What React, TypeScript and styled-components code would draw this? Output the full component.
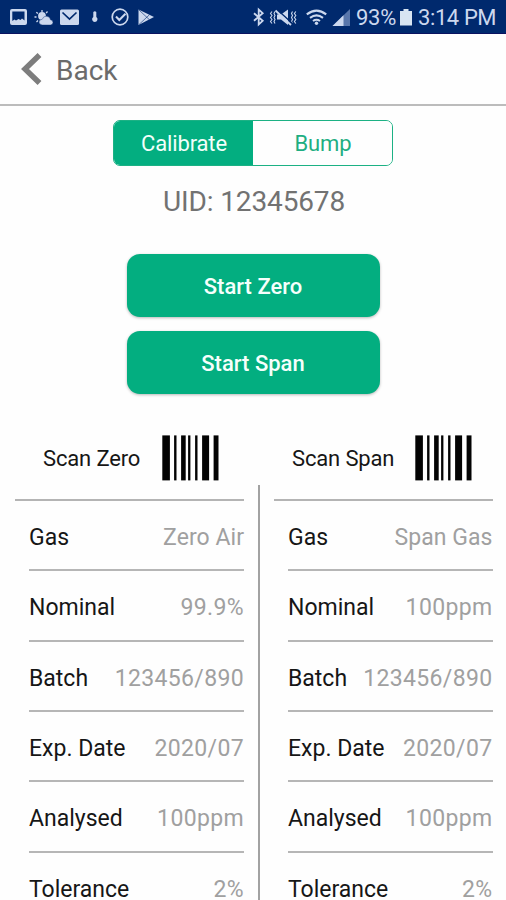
import React from 'react';
import styled, { createGlobalStyle } from 'styled-components';

const GlobalStyle = createGlobalStyle`
  * { box-sizing: border-box; }
  html, body { margin: 0; background: #fdfdfd; overflow: hidden; }
  body { font-family: Roboto, "Liberation Sans", sans-serif; }
`;

const Screen = styled.div`
  width: 506px;
  height: 900px;
  overflow: hidden;
  background: #fefefe;
  display: flex;
  flex-direction: column;
`;

const StatusBar = styled.div`
  height: 34px;
  flex: none;
  background: #00296d;
  border-bottom: 1px solid #0a1260;
  display: flex;
  justify-content: space-between;
  color: #ccd8ee;
`;

const StatusIcons = styled.svg`
  display: block;
  flex: none;
`;

const StatusRight = styled.div`
  display: flex;
  align-items: center;
`;

const StatusText = styled.span<{ $width: number; $spacing?: number }>`
  width: ${(p) => p.$width}px;
  font-size: 22px;
  line-height: 36px;
  height: 33px;
  letter-spacing: ${(p) => p.$spacing ?? 0}px;
  white-space: nowrap;
`;

const NavBar = styled.header`
  height: 71.5px;
  flex: none;
  border-bottom: 2px solid #bcbcbc;
  display: flex;
  align-items: center;
  padding-left: 21px;
  color: #6b6b6b;
`;

const BackLabel = styled.span`
  margin-left: 14px;
  font-size: 28px;
  line-height: 32px;
  padding-top: 4px;
`;

const Segmented = styled.div`
  display: flex;
  width: 280px;
  height: 46px;
  margin: 14.5px auto 0 113px;
  border: 1.5px solid #1cb184;
  border-radius: 7px;
  overflow: hidden;
  flex: none;
`;

const Segment = styled.button<{ $active?: boolean }>`
  flex: 1;
  border: 0;
  padding: 2px 0 0 1px;
  font: 400 22px/42px Roboto, sans-serif;
  letter-spacing: -0.15px;
  background: ${(p) => (p.$active ? '#03ae80' : '#fefefe')};
  color: ${(p) => (p.$active ? '#f2fffa' : '#1fae82')};
`;

const Uid = styled.div`
  margin-top: 19px;
  height: 34px;
  line-height: 34px;
  font-size: 28px;
  letter-spacing: -0.12px;
  text-align: center;
  color: #727272;
  padding-left: 2px;
  flex: none;
`;

const Actions = styled.div`
  display: flex;
  flex-direction: column;
  align-items: center;
  gap: 14px;
  margin-top: 35px;
  flex: none;
`;

const ActionButton = styled.button`
  width: 253px;
  height: 63px;
  border: 0;
  border-radius: 13px;
  background: #03ae80;
  color: #f6fffc;
  font: 500 22px/65px Roboto, sans-serif;
  padding: 0;
  box-shadow: 0 1px 3px rgba(0, 0, 0, 0.28);
`;

const Tables = styled.div`
  display: flex;
  margin-top: 37px;
  flex: none;
`;

const Column = styled.section<{ $left: number; $width: number }>`
  margin-left: ${(p) => p.$left}px;
  width: ${(p) => p.$width}px;
`;

const ScanHeader = styled.div<{ $indent: number }>`
  height: 70px;
  border-bottom: 2px solid #b4b4b4;
  padding: 4px 0 0 ${(p) => p.$indent}px;
  display: flex;
  align-items: flex-start;
`;

const ScanLabel = styled.span<{ $width: number }>`
  width: ${(p) => p.$width}px;
  font-size: 22px;
  line-height: 48px;
  letter-spacing: -0.15px;
  color: #161616;
  white-space: nowrap;
`;

const Divider = styled.div`
  width: 2px;
  height: 420px;
  margin: 54px 0 0 14px;
  background: #a2a2a2;
`;

const Row = styled.div`
  height: 70.35px;
  margin-left: 14px;
  border-bottom: 2px solid #b6b6b6;
  display: flex;
  justify-content: space-between;
  font-size: 23px;
  line-height: 74px;
  white-space: nowrap;
`;

const Name = styled.span`
  color: #161616;
`;

const Value = styled.span<{ $numeric: boolean }>`
  color: #a0a0a0;
  letter-spacing: ${(p) => (p.$numeric ? 0.35 : 0.05)}px;
`;

const bars = [
  [0, 7.6], [11.8, 2.4], [18.8, 4.6], [25.8, 2.3], [32.8, 2.4], [39.8, 7], [51.3, 4.9],
];

const Barcode = () => (
  <svg width="58" height="46" viewBox="0 0 58 46">
    {bars.map(([x, w]) => (
      <rect key={x} x={x + 0.3} y="0.4" width={w} height="45" fill="#030303" />
    ))}
  </svg>
);

const NotificationIcons = () => (
  <StatusIcons width="170" height="33" viewBox="0 0 170 33" fill="#ccd8ee">
    <path fillRule="evenodd" d="M12 9h13q2 0 2 2v12q0 2-2 2H12q-2 0-2-2V11q0-2 2-2zm.3 2.500v9.500l2.200-1.500 1.500 1 2.500-1.500 2 1 1.500-1.500 2.500 2v-9z" />
    <circle cx="42" cy="16" r="3.900" />
    <path d="M42 10v2M36.300 12.200l1.600 1.400M34.500 17h2M36.500 22l1.500-1.500M47.500 11.500l-1.400 1.600" stroke="#ccd8ee" strokeWidth="1.300" />
    <path d="M42.500 25q-3.500-.3-3.500-3 .3-2.600 3.200-2.700 1.100-3.300 4.300-3.100 3.400.2 4 3.600 2.500.2 2.500 2.700 0 2.300-2.500 2.500z" stroke="#00296d" strokeWidth=".4" />
    <rect x="60" y="9.500" width="19" height="15.500" rx="1.500" />
    <path d="M62.500 12.500l7 6.500 7-6.500" fill="none" stroke="#00296d" strokeWidth="1.700" />
    <path d="M93.300 12q1.500-1.300 3 0v5q1.600 1.200 1.100 3-.7 2-2.600 2t-2.600-2q-.5-1.800 1.100-3z" />
    <circle cx="120" cy="17" r="7.800" fill="none" stroke="#ccd8ee" strokeWidth="1.700" />
    <path d="M116 16.500l3.300 3.500 6.200-6.300" fill="none" stroke="#ccd8ee" strokeWidth="2" />
    <path d="M138.500 9.500L154 17l-15.500 8z" />
    <path d="M139 10l10.500 9.800M139 24.500l10.500-9.800" stroke="#00296d" strokeWidth=".6" />
  </StatusIcons>
);

const ConnectionIcons = () => (
  <StatusIcons width="106" height="33" viewBox="250 0 106 33" fill="none" stroke="#ccd8ee">
    <path d="M254 13.200l8.700 7.600-4 3.700V9.500l4 3.700-8.700 7.600" strokeWidth="1.800" />
    <path d="M272 11.500l-1.500 2 1.500 2-1.500 2 1.500 2-1.500 2 1.500 2M275 11.500l-1 2 1 2-1 2 1 2-1 2 1 2M292.500 11.500l-1 2 1 2-1 2 1 2-1 2 1 2M295.800 11.500l-1.400 2 1.400 2-1.400 2 1.400 2-1.400 2 1.400 2" strokeWidth="1.100" />
    <path d="M277 14.500h4l7-5v15.500l-7-5.500h-4z" fill="#ccd8ee" stroke="none" />
    <path d="M277 9.500L293 24" stroke="#00296d" strokeWidth="1.500" />
    <path d="M275.500 10.500L291 25" strokeWidth="1.800" />
    <path d="M306.800 14.300q9.700-7.500 19.400 0M310 17.800q6.500-5 13 0M313 21q3.500-2.500 7 0" strokeWidth="2.100" />
    <circle cx="316.500" cy="23.300" r="1.700" fill="#ccd8ee" stroke="none" />
    <path d="M332.500 26L350 9v17z" fill="#5876ab" stroke="none" />
    <path d="M332.500 26L343.500 15.300V26z" fill="#ccd8ee" stroke="none" />
  </StatusIcons>
);

const zero = [
  ['Gas', 'Zero Air'], ['Nominal', '99.9%'], ['Batch', '123456/890'],
  ['Exp. Date', '2020/07'], ['Analysed', '100ppm'], ['Tolerance', '2%'],
];
const span = [
  ['Gas', 'Span Gas'], ['Nominal', '100ppm'], ['Batch', '123456/890'],
  ['Exp. Date', '2020/07'], ['Analysed', '100ppm'], ['Tolerance', '2%'],
];

const Rows = ({ data }: { data: string[][] }) => (
  <>
    {data.map(([name, value]) => (
      <Row key={name}>
        <Name>{name}</Name>
        <Value $numeric={/\d/.test(value)}>{value}</Value>
      </Row>
    ))}
  </>
);

export default function App() {
  return (
    <Screen>
      <GlobalStyle />
      <StatusBar>
        <NotificationIcons />
        <StatusRight>
          <ConnectionIcons />
          <StatusText $width={43} $spacing={-0.3}>93%</StatusText>
          <StatusIcons width="19" height="33" viewBox="0 0 19 33">
            <path d="M1 11h3.500V9h5v2H13v14.500H1z" fill="#d8e5f2" />
          </StatusIcons>
          <StatusText $width={88} $spacing={-0.4}>3:14 PM</StatusText>
        </StatusRight>
      </StatusBar>
      <NavBar>
        <svg width="21" height="34" viewBox="0 0 21 34">
          <path d="M18.500 3L4 17l14.500 14" fill="none" stroke="#7d7d7d" strokeWidth="5.500" />
        </svg>
        <BackLabel>Back</BackLabel>
      </NavBar>
      <Segmented>
        <Segment $active>Calibrate</Segment>
        <Segment>Bump</Segment>
      </Segmented>
      <Uid>UID: 12345678</Uid>
      <Actions>
        <ActionButton>Start Zero</ActionButton>
        <ActionButton>Start Span</ActionButton>
      </Actions>
      <Tables>
        <Column $left={15} $width={229}>
          <ScanHeader $indent={28}>
            <ScanLabel $width={119}>Scan Zero</ScanLabel>
            <Barcode />
          </ScanHeader>
          <Rows data={zero} />
        </Column>
        <Divider />
        <Column $left={14} $width={218.5}>
          <ScanHeader $indent={18}>
            <ScanLabel $width={123}>Scan Span</ScanLabel>
            <Barcode />
          </ScanHeader>
          <Rows data={span} />
        </Column>
      </Tables>
    </Screen>
  );
}
